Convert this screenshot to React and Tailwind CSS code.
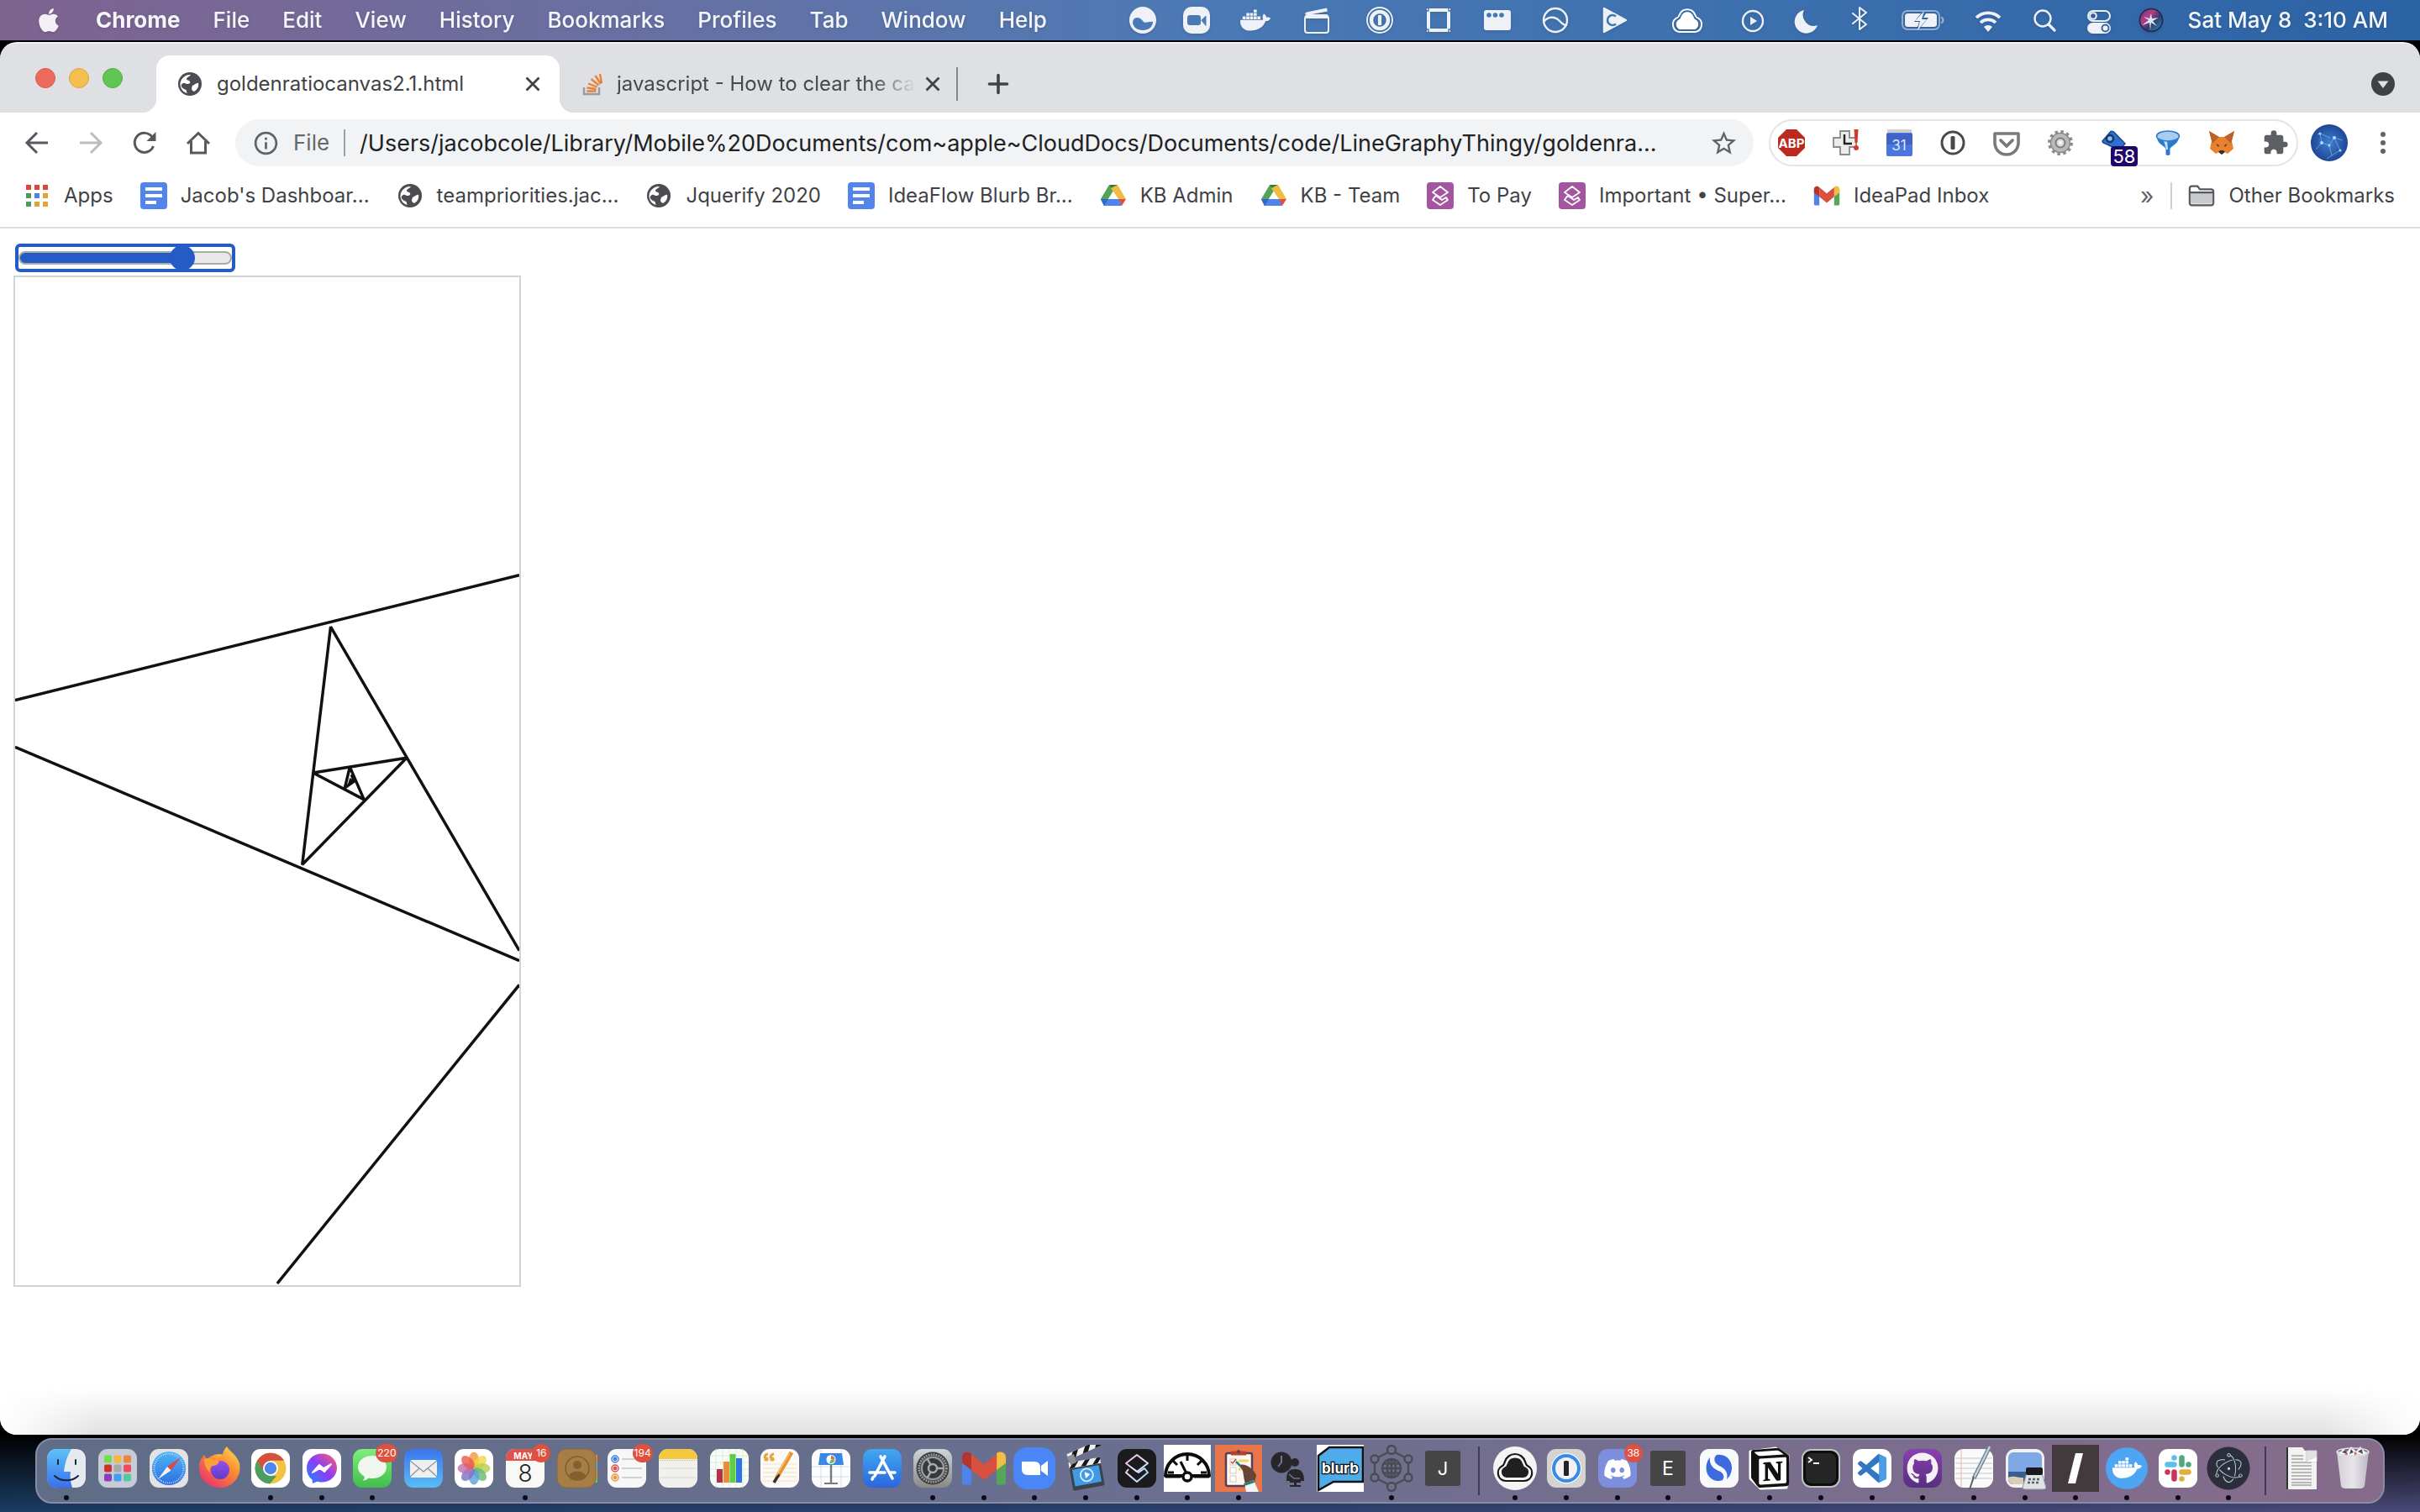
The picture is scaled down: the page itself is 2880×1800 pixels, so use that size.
import { useState } from "react";
import {
  FaApple,
  FaDocker,
  FaDiscord,
  FaGithub,
} from "react-icons/fa";
import { SiElectron, SiNotion } from "react-icons/si";
import { MdExtension, MdStarBorder, MdOutlineInfo } from "react-icons/md";

const INK = "#eef2f8";

/* ---------- menu bar ---------- */

const MENUS = ["File", "Edit", "View", "History", "Bookmarks", "Profiles", "Tab", "Window", "Help"];

function Glyph({ children, w = 36 }) {
  return (
    <svg width={w} height="36" viewBox={`0 0 ${w} 36`} fill="none" stroke={INK} strokeWidth="2.4" strokeLinejoin="round" strokeLinecap="round" aria-hidden="true">
      {children}
    </svg>
  );
}

const STATUS = [
  ["Camo", "w-[60px]", <Glyph><circle cx="18" cy="18" r="16" fill={INK} stroke="none" /><path d="M6 20c1-7 9-6 12-1 3 4 7 0 12 1 0 6-5 10-12 10S6 26 6 20z" fill="#4a7ab5" stroke="none" /></Glyph>],
  ["Zoom", "w-[68px]", <Glyph><rect x="2" y="2" width="32" height="32" rx="10" fill={INK} stroke="none" /><rect x="7" y="12" width="16" height="12" rx="3" fill="#4a7ab5" stroke="none" /><path d="M24 18l5-5v11z" fill="#4a7ab5" stroke="#4a7ab5" strokeWidth="1" /></Glyph>],
  ["Docker", "w-[72px]", <FaDocker size={36} color={INK} />],
  ["Clips", "w-[74px]", <Glyph><rect x="4" y="13" width="28" height="20" rx="3" strokeWidth="2" /><path d="M4 14q0-3 3-3h22q3 0 3 3v2H4z" fill={INK} stroke="none" /><path d="M4 11q0-2 2-2.500L30 3.500l1 4L12 11z" fill={INK} stroke="none" /></Glyph>],
  ["1Password", "w-[76px]", <Glyph><circle cx="18" cy="18" r="15" strokeWidth="1.800" /><circle cx="18" cy="18" r="10" strokeWidth="4.500" /><path d="M18 12v12" strokeWidth="4.200" strokeLinecap="butt" /></Glyph>],
  ["Display", "w-[64px]", <Glyph><rect x="6" y="6" width="24" height="24" strokeWidth="4" strokeLinejoin="miter" /><path d="M6 4v3H4M30 4v3h2M6 32v-3H4M30 32v-3h2" stroke="#4279b4" strokeWidth="1.400" strokeLinecap="butt" /></Glyph>],
  ["Windows", "w-[76px]", <Glyph><rect x="2" y="6" width="32" height="24" rx="3" fill={INK} stroke="none" /><g fill="#4279b4" stroke="none"><circle cx="8" cy="12" r="2.800" /><circle cx="15.500" cy="12" r="2.800" /><circle cx="23" cy="12" r="2.800" /></g></Glyph>],
  ["Sync", "w-[62px]", <Glyph><circle cx="18" cy="18" r="14" /><path d="M5 19c4-5 12-6 17-1 4 4 6 6 9 6" /></Glyph>],
  ["Player", "w-[80px]", <Glyph><path d="M5 4l26 14L5 32z" fill={INK} stroke={INK} /><path d="M19 13.500a6 6 0 1 0 0 9" stroke="#3d7ab2" strokeWidth="2.600" strokeLinecap="butt" /></Glyph>],
  ["Cloud", "w-[92px]", <Glyph w={40}><path d="M11 32a9 9 0 0 1-4-16.500c2 0 3-2 4-4.500a10 10 0 0 1 18 0c1 2.500 2 4.500 4 4.500A9 9 0 0 1 29 32z" strokeWidth="2" stroke="#fff" /><path d="M11 29a6.500 6.500 0 0 1-2-11c3-1 3-3 4-5a7.500 7.500 0 0 1 14 0c1 2 1 4 4 5a6.500 6.500 0 0 1-2 11z" fill="#fff" stroke="none" /></Glyph>],
  ["Now playing", "w-[64px]", <Glyph><circle cx="18" cy="19" r="12" /><path d="M15 14l8 5-8 5z" fill={INK} stroke="none" /></Glyph>],
  ["Do not disturb", "w-[66px]", <Glyph><path d="M14 6a14 14 0 1 0 16 18A13 13 0 0 1 14 6z" fill={INK} stroke="none" /></Glyph>],
  ["Bluetooth", "w-[58px]", <Glyph><path d="M10 10l16 13-8 6V3l8 6-16 13" strokeWidth="2" /></Glyph>],
  ["Battery", "w-[92px]", <Glyph w={54}><rect x="3" y="7" width="44" height="22" rx="6" strokeWidth="2" opacity=".5" /><path d="M50 15q3 3 0 6" opacity=".5" /><path d="M10 10h15l-8 10h6l-2 6H10q-4 0-4-3V13q0-3 4-3zM31 10h9q4 0 4 3v10q0 3-4 3H25l9-11h-6z" fill={INK} stroke="none" /><path d="M29 7L18 19h6l-3 11 11-13h-6z" fill={INK} stroke="none" /></Glyph>],
  ["Wi-Fi", "w-[64px]", <Glyph><path d="M4 15a20 20 0 0 1 28 0M9 21a13 13 0 0 1 18 0" strokeWidth="3.800" strokeLinecap="butt" /><path d="M13 26a7 7 0 0 1 10 0l-5 6z" fill={INK} stroke="none" /></Glyph>],
  ["Spotlight", "w-[70px]", <Glyph><circle cx="16" cy="16" r="9.500" /><path d="M23 23l7 7" strokeWidth="3.200" /></Glyph>],
  ["Control Center", "w-[60px]", <Glyph><rect x="5" y="7" width="26" height="12" rx="6" strokeWidth="2" /><circle cx="11" cy="13" r="3.800" strokeWidth="2" /><rect x="4" y="21" width="28" height="13" rx="6.500" fill={INK} stroke="none" /><circle cx="25.500" cy="27.500" r="4" fill={INK} stroke="#3169aa" strokeWidth="2" /></Glyph>],
  ["Siri", "w-[64px]", <Glyph><defs><linearGradient id="siri" x1="0" y1="0" x2="1" y2="1"><stop offset="0" stopColor="#4d3a78" /><stop offset=".35" stopColor="#b83c86" /><stop offset=".6" stopColor="#2f3c74" /><stop offset="1" stopColor="#2a9db0" /></linearGradient></defs><circle cx="18" cy="18" r="13.500" fill="url(#siri)" stroke="#25244a" strokeWidth="1.500" /><path d="M18 10l1 6 8-1-7 4 5 6-7-4-1 9-1-9-9 3 8-6-6-4 7 2z" fill="#e6f6ff" stroke="none" opacity=".9" /></Glyph>],
];

function MenuBar() {
  return (
    <header className="flex h-12 shrink-0 items-center bg-linear-to-r from-[#7f638f] via-[#4a7ab5] to-[#2c63a5] pr-[38px] pl-[42px] text-[26px] font-medium text-[#f4f6fa]">
      <button aria-label="Apple menu" className="flex w-[72px] items-center drop-shadow">
        <FaApple size={32} color="#f2f0f6" />
      </button>
      <nav className="flex gap-[39px] drop-shadow">
        <button className="font-bold">Chrome</button>
        {MENUS.map((m) => (
          <button key={m}>{m}</button>
        ))}
      </nav>
      <div className="ml-auto flex items-center drop-shadow">
        {STATUS.map(([label, width, icon]) => (
          <button key={label} aria-label={label} className={`flex shrink-0 items-center justify-center ${width}`}>
            {icon}
          </button>
        ))}
        <button className="ml-3 whitespace-pre">Sat May 8  3:10 AM</button>
      </div>
    </header>
  );
}

/* ---------- small shared icons ---------- */

function Globe() {
  return (
    <svg width="28" height="28" viewBox="0 0 28 28" aria-hidden="true">
      <circle cx="14" cy="14" r="14" fill="#4b4d52" />
      <path d="M15 3c-1 2-5 3-5 5s3 1 4 3-1 3-3 3-3-2-5-1-3 2-2 4c1 3 5 3 6 5 0 1 0 2 1 3-5-1-8-5-8.500-10S6 4 13 3zM17 16c3-1 5-4 7-3 1 3-1 8-5 10-2-1-3-2-3-4 1-1 0-2 1-3z" fill="#fff" />
    </svg>
  );
}

function Cross() {
  return (
    <svg width="20" height="20" viewBox="0 0 20 20" stroke="#3f4246" strokeWidth="2.800" aria-hidden="true">
      <path d="M2.500 2.500l15 15M17.500 2.500l-15 15" />
    </svg>
  );
}

function Docs() {
  return (
    <svg width="32" height="32" viewBox="0 0 32 32" aria-hidden="true">
      <rect width="32" height="32" rx="4" fill="#5285ec" />
      <path d="M6 8h20M6 16h20M6 24h13" stroke="#fff" strokeWidth="4" />
    </svg>
  );
}

function Drive() {
  return (
    <svg width="32" height="32" viewBox="0 0 32 32" aria-hidden="true">
      <path d="M11 3L1 20l4 8 11-18z" fill="#54a257" />
      <path d="M11 3h10l-5 8z" fill="#2f7d3c" />
      <path d="M21 3l10 17H21L13 7z" fill="#f0bb41" />
      <path d="M1 20l4 8h21l-3-8z" fill="#4f84ee" />
      <path d="M1 20l4 8 5-8z" fill="#3565cf" />
      <path d="M22 20h9l-5 8z" fill="#dd5144" />
      <path d="M16 11l6 9H10z" fill="#fff" />
    </svg>
  );
}

function Purple() {
  return (
    <svg width="32" height="32" viewBox="0 0 32 32" fill="none" stroke="#fff" strokeWidth="1.800" strokeLinejoin="round" aria-hidden="true">
      <rect width="32" height="32" rx="4" fill="#a4559f" stroke="none" />
      <path d="M16 5l9 7-9 6-9-6zM9 18l-2 3 9 6 9-6-2-3-5 3-7-5z" />
    </svg>
  );
}

function GmailShape() {
  return (
    <g>
      <path d="M0 6v22a2 2 0 0 0 2 2h6V12z" fill="#4f84ec" />
      <path d="M38 6v22a2 2 0 0 1-2 2h-6V12z" fill="#55a65b" />
      <path d="M30 4v13l8-6V6c0-5-5-6-8-4z" fill="#f1bd42" />
      <path d="M0 6v5l8 6V3C5 0 0 1 0 6z" fill="#b4352b" />
      <path d="M8 3v14l11 9 11-9V3l-11 9z" fill="#d95040" />
    </g>
  );
}

function Gmail() {
  return (
    <svg width="32" height="26" viewBox="-1 0 40 31" aria-hidden="true">
      <GmailShape />
    </svg>
  );
}

function AppsGrid() {
  const c = ["#d9483b", "#d9483b", "#d9483b", "#4d9b57", "#4b83ec", "#e2a33a", "#4d9b57", "#e2a33a", "#e2a33a"];
  return (
    <svg width="32" height="32" viewBox="0 0 32 32" aria-hidden="true">
      {c.map((f, i) => (
        <rect key={i} x={3 + (i % 3) * 10} y={3 + Math.floor(i / 3) * 10} width="6" height="6" fill={f} />
      ))}
    </svg>
  );
}

/* ---------- browser chrome ---------- */

function TabStrip() {
  return (
    <div className="flex h-[82px] items-end bg-[#dfe0e4]">
      <div className="flex h-full w-[170px] items-center gap-4 pl-[42px]">
        <button aria-label="Close window" className="size-6 rounded-full border border-[#d65b50] bg-[#ec6a5e]" />
        <button aria-label="Minimize window" className="size-6 rounded-full border border-[#d9a440] bg-[#f4bf50]" />
        <button aria-label="Zoom window" className="size-6 rounded-full border border-[#4fae41] bg-[#62c655]" />
      </div>
      <div className="size-4 rounded-br-2xl bg-[#dfe0e4] shadow-[8px_8px_0_4px_#fff] [clip-path:inset(0)]" />
      <div className="flex h-[68px] w-[480px] items-center rounded-t-2xl bg-white pr-[22px] pl-[26px] text-[#3f4246]">
        <Globe />
        <button className="ml-[18px] flex-1 text-left">goldenratiocanvas2.1.html</button>
        <button aria-label="Close tab"><Cross /></button>
      </div>
      <div className="size-4 rounded-bl-2xl bg-[#dfe0e4] shadow-[-8px_8px_0_4px_#fff] [clip-path:inset(0)]" />
      <div className="flex h-[68px] w-[464px] items-center gap-[14px] pl-[10px] text-[#45484c]">
        <svg width="28" height="28" viewBox="0 0 28 28" fill="none" className="shrink-0" aria-hidden="true">
          <path d="M3 18v8h18v-8" stroke="#9a9b9e" strokeWidth="2.400" />
          <path d="M6.500 22.500h11M6.500 18.500l11 1.500M8 13.500l10.500 4M11.500 8l9 7.500M16.500 4l6.500 10M22 2l2 11" stroke="#e8823a" strokeWidth="2.400" />
        </svg>
        <button className="w-[356px] shrink-0 text-left whitespace-nowrap [mask-image:linear-gradient(to_right,#000_85%,transparent)]">
          javascript - How to clear the ca
        </button>
        <button aria-label="Close tab" className="-ml-1"><Cross /></button>
        <span className="ml-1 h-10 w-[2px] shrink-0 bg-[#85878b]" />
      </div>
      <button aria-label="New tab" className="ml-[28px] flex h-[68px] items-center">
        <svg width="28" height="28" viewBox="0 0 28 28" stroke="#3f4246" strokeWidth="3.600" strokeLinecap="round" aria-hidden="true">
          <path d="M14 3.500v21M3.500 14h21" />
        </svg>
      </button>
      <button aria-label="Search tabs" className="mr-[30px] ml-auto flex h-[68px] items-center">
        <svg width="28" height="28" viewBox="0 0 28 28" aria-hidden="true">
          <circle cx="14" cy="14" r="14" fill="#3e4145" />
          <path d="M7.500 10.500h13L14 19z" fill="#dfe0e4" />
        </svg>
      </button>
    </div>
  );
}

const EXTENSIONS = [
  ["AdBlock Plus", <><path d="M10 0h12l10 10v12L22 32H10L0 22V10z" fill="#ba2a1f" /><text x="16" y="21.500" textAnchor="middle" fontSize="15" fontWeight="700" fill="#fff">ABP</text></>],
  ["History clock", <><path d="M10 2h11v8h8v11h-8v9H10v-9H2V10h8z" fill="#ececec" stroke="#8b8b8b" strokeWidth="1.800" /><path d="M15 6v11h9" stroke="#222" strokeWidth="2.400" fill="none" /><path d="M26.500 0h5l-1 16h-3z" fill="#d8382c" /><circle cx="29" cy="22" r="3" fill="#d8382c" /></>],
  ["Calendar", <><rect x="2" y="0" width="29" height="6" fill="#cfcfcf" /><rect x="1" y="4" width="31" height="28" rx="2" fill="#4a76dd" /><path d="M1 5h31v13H1z" fill="#4163c6" /><text x="16" y="25" textAnchor="middle" fontSize="17" fill="#dbe6fb">31</text></>],
  ["Password manager", <><circle cx="16" cy="16" r="13" fill="#fff" stroke="#47494d" strokeWidth="3" /><rect x="13.500" y="8" width="5" height="16" rx="1.500" fill="#47494d" /></>],
  ["Pocket", <><path d="M2 5h28v11a14 14 0 0 1-28 0z" fill="none" stroke="#77797c" strokeWidth="3.600" strokeLinejoin="round" /><path d="M9 13l7 7 7-7" fill="none" stroke="#77797c" strokeWidth="3.800" strokeLinecap="round" strokeLinejoin="round" /></>],
  ["Settings", <><circle cx="16" cy="16" r="13" fill="none" stroke="#8a8a8a" strokeWidth="4" strokeDasharray="3.400 3.400" /><circle cx="16" cy="16" r="11.500" fill="#b9b9b9" stroke="#8a8a8a" strokeWidth="1.500" /><circle cx="16" cy="16" r="5.500" fill="#dcdcdc" stroke="#7d7d7d" strokeWidth="2" /><circle cx="16" cy="16" r="2" fill="#fff" /></>],
  ["Tags", <><path d="M2 14L12 2.500q3-1 5 2L29 17l-7 8-14-7-5-2z" fill="#2f6fd0" stroke="#1b478f" strokeWidth="1.500" /><circle cx="11" cy="11" r="4" fill="#8fbaf0" stroke="#153668" strokeWidth="2.400" /></>],
  ["Filter", <><path d="M3 9c0 8 8 10 10.500 14v7q2.500 2 5 0v-7C21 19 29 17 29 9z" fill="#2d78cf" /><path d="M10 12c2 4 3 8 4 12h2l-1-12z" fill="#bfe0fa" /><ellipse cx="16" cy="8" rx="13.500" ry="6" fill="#a9cdf1" stroke="#2d78cf" strokeWidth="1.500" /></>],
  ["MetaMask", <><path d="M1 2l12 7h6l12-7-3 12 2 9-7 6-4-2-3 3-3-3-4 2-7-6 2-9z" fill="#e8822e" /><path d="M1 2l12 7-8 8zM31 2L19 9l8 8z" fill="#b9602b" /><path d="M9 17l4 2-1 2zM23 17l-4 2 1 2z" fill="#4a3426" /><path d="M12 27l2-2h4l2 2-4 3z" fill="#33302f" /></>],
];

function Toolbar() {
  return (
    <div className="flex h-[72px] items-center bg-white pl-[28px] pr-[28px]">
      <div className="flex w-[252px] items-center gap-8 text-[#55585c]">
        <button aria-label="Back"><svg width="32" height="32" viewBox="0 0 32 32" fill="none" stroke="currentColor" strokeWidth="3" aria-hidden="true"><path d="M29 16H5M16 4L4 16l12 12" /></svg></button>
        <button aria-label="Forward" className="text-[#bcbdbf]"><svg width="32" height="32" viewBox="0 0 32 32" fill="none" stroke="currentColor" strokeWidth="3" aria-hidden="true"><path d="M3 16h24M16 4l12 12-12 12" /></svg></button>
        <button aria-label="Reload"><svg width="32" height="32" viewBox="0 0 32 32" fill="none" stroke="currentColor" strokeWidth="3" aria-hidden="true"><path d="M26.500 20A11.500 11.500 0 1 1 25 9" /><path d="M29.500 3v11h-11z" fill="currentColor" stroke="none" /></svg></button>
        <button aria-label="Home"><svg width="32" height="32" viewBox="0 0 32 32" fill="none" stroke="currentColor" strokeWidth="3" aria-hidden="true"><path d="M3 17L16 4.500 29 17M7.500 14v14h17V14" strokeLinejoin="miter" /></svg></button>
      </div>
      <div className="flex h-14 min-w-0 flex-1 items-center rounded-full bg-[#f1f3f4] pr-[18px] pl-5">
        <MdOutlineInfo size={33} color="#606367" className="shrink-0" />
        <label htmlFor="address" className="ml-4 text-[26px] text-[#65686c]">File</label>
        <span className="ml-[17px] h-8 w-[2px] shrink-0 bg-[#9c9fa3]" />
        <input id="address" className="ml-[17px] min-w-0 flex-1 bg-transparent text-[27px] text-[#202124] outline-none" defaultValue="/Users/jacobcole/Library/Mobile%20Documents/com~apple~CloudDocs/Documents/code/LineGraphyThingy/goldenra..." />
        <button aria-label="Bookmark this page"><MdStarBorder size={35} color="#606367" /></button>
      </div>
      <div className="ml-[18px] flex h-14 items-center gap-8 rounded-full border-2 border-[#e3e4e6] px-[9px]">
        {EXTENSIONS.map(([label, art]) => (
          <button key={label} aria-label={label} className="relative">
            <svg width="32" height="32" viewBox="0 0 32 32" aria-hidden="true">{art}</svg>
            {label === "Tags" && (
              <span className="absolute top-5 left-3 flex h-6 w-8 items-center justify-center rounded bg-[#1d0668] text-[22px] leading-6 text-white">58</span>
            )}
          </button>
        ))}
        <button aria-label="Extensions"><MdExtension size={32} color="#5c5f63" /></button>
      </div>
      <button aria-label="Profile" className="ml-[15px]">
        <svg width="44" height="44" viewBox="0 0 44 44" aria-hidden="true">
          <defs><radialGradient id="ava"><stop offset="0" stopColor="#3f7fd0" /><stop offset="1" stopColor="#1f4796" /></radialGradient></defs>
          <circle cx="22" cy="22" r="22" fill="url(#ava)" />
          <path d="M6 30l7-8 9 3 6-9 10 3M13 22l-2-11 12 5M22 25l3 12 10-6-7-15M8 12l3-1M25 37l-6 4" stroke="#7db8ea" strokeWidth="1" fill="none" opacity=".7" />
          <g fill="#a8dcf7"><circle cx="13" cy="22" r="2" /><circle cx="28" cy="16" r="2" /><circle cx="22" cy="25" r="1.500" /><circle cx="35" cy="31" r="1.500" /><circle cx="11" cy="11" r="1.500" /></g>
        </svg>
      </button>
      <button aria-label="Menu" className="ml-[26px]">
        <svg width="32" height="32" viewBox="0 0 32 32" fill="#606367" aria-hidden="true"><circle cx="16" cy="6" r="3" /><circle cx="16" cy="16" r="3" /><circle cx="16" cy="26" r="3" /></svg>
      </button>
    </div>
  );
}

const BOOKMARKS = [
  ["Apps", <AppsGrid />],
  ["Jacob's Dashboar...", <Docs />],
  ["teampriorities.jac...", <Globe />],
  ["Jquerify 2020", <Globe />],
  ["IdeaFlow Blurb Br...", <Docs />],
  ["KB Admin", <Drive />],
  ["KB - Team", <Drive />],
  ["To Pay", <Purple />],
  ["Important • Super...", <Purple />],
  ["IdeaPad Inbox", <Gmail />],
];

function BookmarksBar() {
  return (
    <nav className="flex h-[66px] items-center border-b-2 border-[#dcdce0] bg-white pr-[30px] pb-[10px] pl-7 text-[#3f4246]">
      <div className="flex items-center gap-8">
        {BOOKMARKS.map(([label, icon], i) => (
          <a key={i} href="#" className="flex shrink-0 items-center gap-4 whitespace-nowrap">
            <span className="flex w-8 justify-center">{icon}</span>
            {label}
          </a>
        ))}
      </div>
      <button aria-label="More bookmarks" className="ml-auto text-[28px] text-[#606367]">»</button>
      <span className="ml-[20px] h-8 w-[2px] bg-[#cfd0d3]" />
      <a href="#" className="ml-[19px] flex items-center gap-4 whitespace-nowrap">
        <svg width="32" height="28" viewBox="0 0 34 28" aria-hidden="true">
          <path d="M2 5q0-3 3-3h7l3 4h14q3 0 3 3v14q0 3-3 3H5q-3 0-3-3z" fill="#fff" stroke="#55585c" strokeWidth="2.400" />
          <path d="M3 10h28v14H3z" fill="#c9cacc" /><path d="M2 10h30" stroke="#55585c" strokeWidth="2.400" />
        </svg>
        Other Bookmarks
      </a>
    </nav>
  );
}

/* ---------- page ---------- */

function Page() {
  const [value, setValue] = useState(81);
  return (
    <main className="flex flex-1 flex-col bg-white px-4 pt-[18px]">
      <div className="ml-[2px] flex h-[34px] w-[262px] items-center rounded-md border-4 border-[#245bc5]">
        <input
          type="range"
          min="0"
          max="100"
          value={value}
          onChange={(e) => setValue(Number(e.target.value))}
          aria-label="Ratio"
          style={{ "--fill": `${value - 3}%` }}
          className="h-4 w-full appearance-none rounded-full border-2 border-[#a9a9a9] bg-[linear-gradient(to_right,#245bc5_var(--fill),#e9e9e9_var(--fill))] outline-none [&::-webkit-slider-thumb]:size-[30px] [&::-webkit-slider-thumb]:appearance-none [&::-webkit-slider-thumb]:rounded-full [&::-webkit-slider-thumb]:bg-[#245bc5]"
        />
      </div>
      <svg width="604" height="1204" viewBox="-2 -2 604 1204" className="mt-1 border-2 border-[#d3d3d3]" fill="none" stroke="#111" strokeWidth="4" strokeLinejoin="bevel" role="img" aria-label="Nested triangle spiral">
        <path d="M-2 503L602 353" strokeWidth="3.500" />
        <path d="M-2 559L602 815" strokeWidth="3.500" />
        <path d="M602 844L312 1202" strokeWidth="3.500" />
        <path d="M602 803L376 415L342 700L467 572L355 590L416 622L399 583L393 608L404 600L401 592" strokeWidth="3.500" />
        <path d="M399 596l4 3-7 6z" fill="#111" stroke="none" />
      </svg>
      <div className="-mx-4 mt-auto h-[56px] bg-linear-to-b from-transparent to-[#e1e1e1] [mask-image:linear-gradient(to_right,transparent,#000_4%,#000_96%,transparent)]" />
    </main>
  );
}

/* ---------- dock ---------- */

function Tile({ fill, stroke }) {
  return <rect x="5" y="5" width="46" height="46" rx="11" fill={fill} stroke={stroke} />;
}

function Grad({ id, a, b }) {
  return (
    <linearGradient id={id} x1="0" y1="0" x2="0" y2="1">
      <stop offset="0" stopColor={a} />
      <stop offset="1" stopColor={b} />
    </linearGradient>
  );
}

const ART = {
  finder: <>
    <defs><Grad id="fi" a="#5cc4f6" b="#3a6ff0" /><clipPath id="ficlip"><rect x="5" y="5" width="46" height="46" rx="11" /></clipPath></defs>
    <g clipPath="url(#ficlip)"><Tile fill="#e6e9ee" /><path d="M5 5h29c-5 8-8 17-9 27h8c-1 7 0 13 2 19H5z" fill="url(#fi)" /></g>
    <path d="M18 18v5M39 18v5M14 37c7 7 21 7 28 0" stroke="#17273a" strokeWidth="2" fill="none" strokeLinecap="round" />
  </>,
  launchpad: <>
    <Tile fill="#c6cbd5" />
    {["#74de4c", "#f4b83c", "#e8863a", "#c93429", "#a4a9af", "#ee4b62", "#8d3cc2", "#3f9ff2", "#5bc59b"].map((c, i) => (
      <rect key={i} x={12 + (i % 3) * 11.5} y={12.5 + Math.floor(i / 3) * 11} width="9" height="9" rx="2" fill={c} />
    ))}
  </>,
  safari: <>
    <defs><Grad id="sa" a="#4db5f5" b="#2f6fe0" /></defs>
    <Tile fill="#e3e3e5" /><circle cx="28" cy="28" r="20" fill="url(#sa)" /><circle cx="28" cy="28" r="17.500" fill="none" stroke="#d5e9fb" strokeWidth="2" strokeDasharray=".8 1.600" />
    <path d="M42 15L30.500 30.500 26 26z" fill="#e2483d" /><path d="M15 41l11-15 4.500 4.500z" fill="#f4f4f4" />
  </>,
  firefox: <>
    <defs><linearGradient id="ff" x1="1" y1="0" x2=".2" y2="1"><stop offset="0" stopColor="#ffe74e" /><stop offset=".45" stopColor="#fb8a35" /><stop offset="1" stopColor="#e8316f" /></linearGradient><Grad id="ffb" a="#9a4df0" b="#5b3cc8" /></defs>
    <circle cx="28" cy="31" r="20" fill="url(#ff)" />
    <path d="M32 12C33 6 36 3 37 2c3 6 12 10 15 20 3 15-8 29-22 29C14 51 3 40 4 27c0-7 3-12 6-15l3 5c5-3 9-1 13 0z" fill="url(#ff)" />
    <circle cx="29" cy="30" r="11" fill="url(#ffb)" />
    <path d="M10 17c5-2 9-1 12 1 3 0 5 0 6 1-1 4-4 6-8 6-3 1-4 4-3 8-5-4-7-10-7-16z" fill="#fba03a" />
  </>,
  chrome: <>
    <Tile fill="#fff" /><circle cx="28" cy="28" r="18.500" fill="#f2c343" />
    <path d="M12 19A18.500 18.500 0 0 1 44 18.700H28l-8 14z" fill="#d5503f" />
    <path d="M12 18.700l8.500 14 7.500 4.300-4 9A18.500 18.500 0 0 1 12 18.700z" fill="#4b9d60" /><path d="M28 37h7l-8 9.500-4-.7z" fill="#4b9d60" />
    <circle cx="28" cy="28" r="9" fill="#fff" /><circle cx="28" cy="28" r="7.200" fill="#4f86ec" />
  </>,
  messenger: <>
    <defs><linearGradient id="ms" x1="0" y1="1" x2="1" y2="0"><stop offset="0" stopColor="#1c8cff" /><stop offset=".5" stopColor="#8d3cf5" /><stop offset="1" stopColor="#ff5f74" /></linearGradient></defs>
    <Tile fill="#fff" /><path d="M28 10.500c10 0 18 7.500 18 17s-8 17-18 17c-2 0-4-.3-5.500-.8L17 46l-.5-4.500C12.500 38.500 10 33.500 10 27.500c0-9.500 8-17 18-17z" fill="url(#ms)" />
    <path d="M17 33l8-9 5 4 9-5-8 9-5-4z" fill="#fff" stroke="#fff" strokeWidth="2" strokeLinejoin="round" />
  </>,
  messages: <>
    <defs><Grad id="me" a="#7df07a" b="#43bc4c" /></defs>
    <Tile fill="url(#me)" /><path d="M28 13c10 0 17 6 17 13.500S38 40 28 40c-2 0-3 0-4.500-.5-1.500 2-4 3-7 3 2-1.500 2.500-3 2-5C14 35 11 31 11 26.500 11 19 18 13 28 13z" fill="#f0f7ee" />
  </>,
  mail: <>
    <defs><Grad id="ma" a="#3b74ee" b="#58bdf6" /></defs>
    <Tile fill="url(#ma)" /><rect x="12" y="18" width="32" height="21" rx="2" fill="#efefef" /><path d="M12 19l16 13 16-13M12 38l11-10M44 38L33 28" stroke="#8e9297" strokeWidth="1.200" fill="none" />
  </>,
  photos: <>
    <Tile fill="#fff" />
    {["#f29a37", "#f1d63d", "#b4cf4b", "#65b977", "#5d9fdc", "#7c71c0", "#c06fae", "#e8584c"].map((c, i) => (
      <ellipse key={c} cx="28" cy="18" rx="6" ry="9.500" fill={c} opacity=".8" transform={`rotate(${i * 45} 28 28)`} />
    ))}
  </>,
  calendar: <>
    <Tile fill="#f8f8f6" /><path d="M5 19v-3A11 11 0 0 1 16 5h24a11 11 0 0 1 11 11v3z" fill="#e0524a" />
    <text x="26" y="16.500" fontSize="10" fontWeight="700" fill="#fff" textAnchor="middle">MAY</text>
    <text x="28" y="44" fontSize="28" fontWeight="300" fill="#222" textAnchor="middle">8</text>
  </>,
  contacts: <>
    <path d="M49 12h4v9h-4zM49 30h4v8h-4z" fill="#e0873b" /><path d="M49 21h4v9h-4z" fill="#57b0e8" /><path d="M49 38h4v7h-4z" fill="#6cc65a" />
    <Tile fill="#a57d45" stroke="#8d6a3a" /><circle cx="29" cy="28" r="14" fill="none" stroke="#80602f" strokeWidth="1.500" /><circle cx="29" cy="24" r="5" fill="#80602f" /><path d="M19 37c2-7 18-7 20 0-5 6-15 6-20 0z" fill="#80602f" />
  </>,
  reminders: <>
    <Tile fill="#f7f7f7" /><path d="M22 17h24M22 28h24M22 39h24" stroke="#c5c5c5" strokeWidth="1.500" />
    <g fill="none" strokeWidth="1.500"><circle cx="14" cy="17" r="4" stroke="#3c7df0" /><circle cx="14" cy="28" r="4" stroke="#e0524a" /><circle cx="14" cy="39" r="4" stroke="#e69a3c" /></g>
    <circle cx="14" cy="17" r="2.400" fill="#3c7df0" /><circle cx="14" cy="28" r="2.400" fill="#e0524a" /><circle cx="14" cy="39" r="2.400" fill="#e69a3c" />
  </>,
  notes: <>
    <Tile fill="#f1f0ed" /><path d="M5 17v-1A11 11 0 0 1 16 5h24a11 11 0 0 1 11 11v1z" fill="#f4c83f" /><path d="M5 18.500h46" stroke="#bdbdb9" strokeDasharray="1 1" /><path d="M6 28h44M6 39h44" stroke="#d8d7d3" />
  </>,
  numbers: <>
    <Tile fill="#f9fbf7" /><path d="M12 5v46M20 5v46M28 5v46M36 5v46M44 5v46M5 13h46M5 21h46M5 29h46M5 37h46" stroke="#cfe8c8" strokeWidth=".7" />
    <rect x="13" y="29" width="7" height="16" fill="#b5304a" /><rect x="21" y="20" width="7" height="25" fill="#e68f38" /><rect x="28.500" y="11" width="7" height="34" fill="#5fcf46" /><rect x="36" y="16" width="7" height="29" fill="#2f74e4" />
  </>,
  pages: <>
    <Tile fill="#fbfaf6" /><path d="M8 23h40M8 28h40M8 33h40M8 38h40M8 43h40" stroke="#f2e0c4" />
    <path d="M10 16q0-5 4-5M17 16q0-5 4-5" stroke="#e9a441" strokeWidth="3" fill="none" /><circle cx="12" cy="17" r="2.600" fill="#e9a441" /><circle cx="19" cy="17" r="2.600" fill="#e9a441" />
    <path d="M42 9L25 38" stroke="#e8932f" strokeWidth="5" /><path d="M27 35l-6 10" stroke="#333" strokeWidth="3.500" /><path d="M40 10L24 37" stroke="#f7c375" strokeWidth="1.200" />
  </>,
  keynote: <>
    <Tile fill="#fdfdfd" /><path d="M16 5v46M40 5v46M5 26h46M5 38h46" stroke="#cfe0f3" strokeWidth="1" />
    <path d="M15 10h26l2 14H13z" fill="#3a87e6" /><circle cx="28" cy="17.500" r="5.500" fill="#fff" /><path d="M28 17.500V13a4.500 4.500 0 0 1 4.500 4.500z" fill="#ee6a43" /><path d="M28 17.500h4.500A4.500 4.500 0 0 1 26 21.500z" fill="#63bf57" /><path d="M28 24v22" stroke="#777b80" strokeWidth="2.400" /><path d="M20 46h16" stroke="#777b80" strokeWidth="2" />
  </>,
  appstore: <>
    <defs><Grad id="as" a="#41a7ef" b="#2b66df" /></defs>
    <Tile fill="url(#as)" /><path d="M31 14L19 37M26 14l14 26M13 33h18M37 33h6M17 39l-1 2" stroke="#fff" strokeWidth="3.600" strokeLinecap="round" fill="none" />
  </>,
  settings: <>
    <defs><Grad id="se" a="#cdd6da" b="#8b8985" /></defs>
    <Tile fill="url(#se)" /><circle cx="28" cy="28" r="19.500" fill="#3e3f42" /><circle cx="28" cy="28" r="16.500" fill="#55575b" stroke="#a3a5a8" strokeWidth="2.500" strokeDasharray="1.500 1.500" /><circle cx="28" cy="28" r="13" fill="#38393c" stroke="#9d9fa2" strokeWidth="2" /><circle cx="28" cy="28" r="5" fill="#38393c" stroke="#a9abae" strokeWidth="2.500" /><path d="M33 28h8M25.500 32.500l-4 7M25.500 23.500l-4-7" stroke="#a9abae" strokeWidth="2.500" />
  </>,
  gmail: <g transform="translate(2 7) scale(1.370 1.350)"><GmailShape /></g>,
  zoom: <><rect x="3" y="3" width="50" height="50" rx="16" fill="#4b86f6" /><path d="M13 20h15q7 0 7 7v9H20q-7 0-7-7zM36 25l8-6v18l-8-6z" fill="#fff" /></>,
  clapper: <>
    <g transform="rotate(-10 28 34)"><rect x="10" y="25" width="38" height="27" rx="2" fill="#3c424a" /><rect x="13" y="27" width="32" height="20" fill="#3f9be6" /><circle cx="29" cy="36" r="7.500" fill="none" stroke="#d7ecfb" strokeWidth="1.800" /><path d="M27 32l6 4-6 4z" fill="#fff" /><path d="M10 18h38v7H10z" fill="#eee" /><path d="M10 25l6-7h6l-6 7zM24 25l6-7h6l-6 7zM38 25l6-7h4v2l-4 5z" fill="#161616" /></g>
    <g transform="rotate(-24 10 17)"><path d="M8 10h42v7H8z" fill="#f2f2f2" /><path d="M10 17l6-7h7l-6 7zM26 17l6-7h7l-6 7zM42 17l5-7h3v7z" fill="#161616" /></g>
    <path d="M6 14l8-3 3 10-7 3z" fill="#8b9096" />
  </>,
  shortcuts: <>
    <defs><linearGradient id="sh" x1="0" y1="0" x2="1" y2="1"><stop offset="0" stopColor="#f3b6dc" /><stop offset=".5" stopColor="#e9e4ff" /><stop offset="1" stopColor="#7fd6f2" /></linearGradient></defs>
    <Tile fill="#1b1b1d" /><path d="M28 12l13 10-13 10-13-10zM18 29l-3 4 13 11 13-11-4-5-7 5-10-7" fill="none" stroke="url(#sh)" strokeWidth="2" strokeLinejoin="round" />
  </>,
  gauge: <>
    <rect width="56" height="56" fill="#fff" /><path d="M2 37a26 26 0 0 1 52 0z" fill="none" stroke="#0b0b0b" strokeWidth="4" strokeLinejoin="round" /><path d="M2 38h18M36 38h18M28 11v8M11 19l5 5M45 19l-5 5M5 33h7M51 33h-7M20 20l7 14" stroke="#0b0b0b" strokeWidth="3" /><circle cx="28" cy="38" r="5" fill="#fff" stroke="#0b0b0b" strokeWidth="3.400" />
  </>,
  tasks: <>
    <rect width="56" height="56" fill="#e9764a" /><rect x="13" y="10" width="31" height="39" rx="2" fill="#fdf9f1" stroke="#54405c" strokeWidth="2.500" /><path d="M19 10h18" stroke="#b5412f" strokeWidth="5" /><circle cx="28" cy="8" r="2" fill="#54405c" />
    <g fill="#fff" stroke="#cfc7be"><rect x="18" y="17" width="7" height="7" /><rect x="18" y="27" width="7" height="7" /><rect x="18" y="37" width="7" height="7" /></g>
    <path d="M28 19h12M28 29h10" stroke="#f3cf72" strokeWidth="3" /><path d="M19 20l2 2 4-5" stroke="#d23f35" strokeWidth="1.500" fill="none" /><path d="M25 20l16 16" stroke="#2c7f79" strokeWidth="2.500" /><path d="M30 24c6-2 15 4 19 12l-2 10-10 2c-3-6-3-13-4-17z" fill="#674436" /><path d="M35 46l11-4 6 14H37z" fill="#f6f6f6" /><path d="M34 46l12-4 1 3-12 4z" fill="#2c7f79" />
  </>,
  worker: <g fill="#26262b">
    <circle cx="18" cy="21" r="12.500" /><path d="M18 13v8l-4 5" stroke="#74728f" strokeWidth="2" fill="none" /><circle cx="34" cy="21" r="5" /><path d="M24 43c0-10 2-14 10-14s11 4 11 14h-4v2H28v-2z" /><path d="M27 35l6 5h7" stroke="#74728f" strokeWidth="1.500" fill="none" /><path d="M33 44h3v4h5v2H28v-2h5z" />
  </g>,
  blurb: <>
    <rect width="56" height="56" fill="#fff" /><path d="M2 13L15 3h40v41H20L2 54z" fill="#4facea" stroke="#111" strokeWidth="2.500" />
    <text x="28" y="34" fontSize="17" fontWeight="700" textAnchor="middle" fill="#fff" stroke="#111" strokeWidth="2.500" paintOrder="stroke">blurb</text>
  </>,
  network: <g fill="none" stroke="#4b4b54" strokeWidth="2.400">
    <circle cx="28" cy="28" r="11" /><ellipse cx="28" cy="28" rx="5" ry="11" /><path d="M17 28h22M19 22.500h18M19 33.500h18M28 17v22" />
    <circle cx="28" cy="6" r="5" /><circle cx="28" cy="50" r="5" /><circle cx="8" cy="17" r="4.500" /><circle cx="48" cy="17" r="4.500" /><circle cx="8" cy="39" r="4.500" /><circle cx="48" cy="39" r="4.500" /><path d="M24 9l-12 6M32 9l12 6M8 22v12M48 22v12M12 41l12 6M44 41l-12 6" />
  </g>,
  letterJ: <><rect x="7" y="7" width="42" height="42" rx="3" fill="#454545" /><text x="28" y="36" fontSize="22" fill="#fff" textAnchor="middle">J</text></>,
  cloud: <>
    <circle cx="28" cy="28" r="26" fill="#f4f4f4" /><path d="M17 43a9.500 9.500 0 0 1-4-18c2-1 2-3 3-5a12.500 12.500 0 0 1 24 0c1 2 1 4 3 5a9.500 9.500 0 0 1-4 18z" fill="none" stroke="#18181a" strokeWidth="2.200" /><path d="M18 39a6.500 6.500 0 0 1-3-12c3-1 3-3 4-5a9.500 9.500 0 0 1 18 0c1 2 1 4 4 5a6.500 6.500 0 0 1-3 12z" fill="#202022" />
  </>,
  onepassword: <>
    <Tile fill="#d4d4d2" /><circle cx="28" cy="28" r="18" fill="#fff" /><circle cx="28" cy="28" r="15" fill="#f2f2f2" stroke="#3a8be8" strokeWidth="4" /><rect x="25" y="19" width="6" height="18" rx="1.500" fill="#232327" />
  </>,
  discord: <><Tile fill="#7c8fdc" /><FaDiscord x={11} y={12} size={34} color="#fff" /></>,
  letterE: <><rect x="7" y="7" width="42" height="42" rx="3" fill="#454545" /><text x="28" y="36" fontSize="23" fill="#fff" textAnchor="middle">E</text></>,
  simplenote: <>
    <Tile fill="#f8f9fa" /><path d="M25 12c12-2 19 8 18 17-1 6-3 9-6 12 2-8-2-13-9-16-7-4-7-10-3-13z" fill="#3d6bdf" /><path d="M17 15c-6 7-6 18 0 24 4 4 10 5 15 3 3-4 1-9-5-11-7-3-11-8-10-16z" fill="#3d6bdf" />
  </>,
  notion: <><path d="M5 8L35 4l15 9-2 38-31 1L5 40z" fill="#fff" stroke="#fff" strokeWidth="3" strokeLinejoin="round" /><SiNotion x={5} y={4} size={47} color="#111" /></>,
  terminal: <><Tile fill="#bfc3c3" /><rect x="7" y="7" width="42" height="42" rx="9" fill="#0d0d0d" /><rect x="10" y="10" width="36" height="36" rx="7" fill="#262626" /><path d="M13 15l4 3-4 3M19 22h7" stroke="#fff" strokeWidth="1.800" fill="none" /></>,
  vscode: <>
    <Tile fill="#fff" /><svg x="11" y="11" width="34" height="34" viewBox="0 0 24 24"><path fill="#3277c4" d="M23.150 2.587L18.210.210a1.494 1.494 0 0 0-1.705.290l-9.460 8.630-4.120-3.128a.999.999 0 0 0-1.276.057L.327 7.261A1 1 0 0 0 .326 8.740L3.899 12 .326 15.260a1 1 0 0 0 .001 1.479L1.650 17.940a.999.999 0 0 0 1.276.057l4.120-3.128 9.460 8.630a1.492 1.492 0 0 0 1.704.290l4.942-2.377A1.500 1.500 0 0 0 24 20.060V3.939a1.500 1.500 0 0 0-.850-1.352zm-5.146 14.861L10.826 12l7.178-5.448v10.896z" /><path d="M18 .2l5.200 2.400q.8.500.8 1.400v16q0 1-.8 1.400L18 23.800z" fill="#4b9de6" /></svg>
  </>,
  github: <><defs><Grad id="gh" a="#8a3fb0" b="#56307f" /></defs><Tile fill="url(#gh)" /><FaGithub x={9} y={9} size={38} color="#f3f0f6" /></>,
  textedit: <>
    <Tile fill="#fafafa" /><path d="M6 16h44M6 22h44M6 28h44M6 34h44M6 40h44" stroke="#c4c6c9" /><path d="M13 6v44" stroke="#f0b2ae" /><path d="M47 2L28 40" stroke="#71828f" strokeWidth="5" /><path d="M47 2L27 42" stroke="#cfd9e0" strokeWidth="2" /><path d="M28 38l-5 15" stroke="#555e66" strokeWidth="2" />
  </>,
  preview: <>
    <Tile fill="#f2f2f2" /><rect x="8" y="9" width="40" height="38" rx="6" fill="#7ea9e4" /><path d="M8 32h40v9a6 6 0 0 1-6 6H14a6 6 0 0 1-6-6z" fill="#375f8c" /><path d="M8 39c8-3 12 1 18 0v8H14a6 6 0 0 1-6-6z" fill="#d8cdb8" />
    <path d="M30 33h18l5 18q0 2-3 2H28q-3 0-3-2z" fill="#dfe3e6" stroke="#8d9399" /><rect x="29" y="27" width="20" height="9" rx="2" fill="#1a1a1c" /><path d="M32 41h13M31 45h15" stroke="#57606a" strokeWidth="2.500" strokeDasharray="3 2" />
  </>,
  slash: <><rect width="56" height="56" fill="#433a3d" /><path d="M28 10h9l-9 36h-9z" fill="#fff" /></>,
  docker: <><circle cx="28" cy="28" r="25" fill="#4da5f4" /><FaDocker x={11} y={10} size={35} color="#fff" /></>,
  slack: <>
    <Tile fill="#fff" />
    <g strokeWidth="6.500" strokeLinecap="round"><path d="M23.500 15.500v0M15.500 23.500h8" stroke="#5cbfe8" /><path d="M32.500 15.500v8M40.500 23.500v0" stroke="#4fa97c" /><path d="M32.500 32.500h8M32.500 40.500v0" stroke="#e0af40" /><path d="M23.500 32.500v8M15.500 32.500v0" stroke="#cc335b" /></g>
  </>,
  electron: <><circle cx="28" cy="28" r="25.500" fill="#2c2f3b" /><SiElectron x={11} y={10} size={35} color="#b9dbe2" /></>,
  document: <>
    <path d="M11 3h18l3 4h14v46H11z" fill="#f2f2f0" /><path d="M11 3v50" stroke="#333" strokeWidth="2" /><path d="M16 13h14M16 17h14M16 21h24M16 25h24M16 29h24M16 33h24M16 37h24M16 41h24M16 45h24M16 48h24" stroke="#a5a5a5" strokeWidth="1.400" /><path d="M34 7h12v13H34z" fill="#e2e2e2" stroke="#cfcfcf" /><path d="M34 20l12-5v5z" fill="#fff" />
  </>,
  trash: <>
    <defs><linearGradient id="tr" x1="0" x2="1"><stop offset="0" stopColor="#d9d6dc" /><stop offset=".5" stopColor="#f1f0f3" /><stop offset="1" stopColor="#c4bfc8" /></linearGradient></defs>
    <path d="M9 8h38l-5 41q-1 3-5 3H19q-4 0-5-3z" fill="url(#tr)" opacity=".92" /><path d="M11 12l6-8 4 5 5-7 6 6 5-6 7 8-3 3-8-3-6 4-7-4-6 3z" fill="#f7f7f7" /><path d="M15 9l4-3 3 5zM34 8l5-3 1 6zM26 5l3 4-5 2z" fill="#4b4f56" /><path d="M18 12l3-3 1 4zM30 8l3 2-3 3z" fill="#c8604a" /><ellipse cx="28" cy="8.500" rx="19" ry="4.500" fill="none" stroke="#dcdce2" strokeWidth="1.500" />
  </>,
};

const APPS = [
  ["Finder", "finder", true], ["Launchpad", "launchpad"], ["Safari", "safari"], ["Firefox", "firefox"], ["Chrome", "chrome", true],
  ["Messenger", "messenger", true], ["Messages", "messages", true, "220"], ["Mail", "mail"], ["Photos", "photos"], ["Calendar", "calendar", true, "16"],
  ["Contacts", "contacts"], ["Reminders", "reminders", false, "194"], ["Notes", "notes"], ["Numbers", "numbers"], ["Pages", "pages"],
  ["Keynote", "keynote"], ["App Store", "appstore"], ["System Preferences", "settings", true], ["Gmail", "gmail", true], ["Zoom", "zoom", true],
  ["Clips", "clapper", true], ["Shortcuts", "shortcuts", true], ["Gauge", "gauge", true], ["Tasks", "tasks", true], ["Worker", "worker"],
  ["Blurb", "blurb"], ["Network", "network", true], ["J", "letterJ"], null,
  ["Cloud", "cloud", true], ["1Password", "onepassword", true], ["Discord", "discord", true, "38"], ["E", "letterE", true], ["Simplenote", "simplenote", true],
  ["Notion", "notion", true], ["Terminal", "terminal", true], ["Code", "vscode", true], ["GitHub", "github", true], ["TextEdit", "textedit", true],
  ["Preview", "preview", true], ["Slash", "slash", true], ["Docker", "docker", true], ["Slack", "slack", true], ["Electron", "electron", true], null,
  ["Documents", "document"], ["Trash", "trash"],
];

function Dock() {
  return (
    <div className="shrink-0 bg-linear-to-b from-black to-transparent px-[42px] pt-1 pb-[10px]">
      <nav aria-label="Dock" className="flex h-[78px] rounded-[20px] border-2 border-[#8a8ca6] bg-linear-to-r from-[#606d87] via-[#6b6f90] to-[#866b8b] pr-[6px] pl-[5px]">
        {APPS.map((app, i) => {
          if (!app) return <span key={i} className="mx-[12px] mt-2 h-[58px] w-[2px] shrink-0 bg-[#41385c]" />;
          const [label, art, running, badge] = app;
          return (
            <button key={label} aria-label={label} className="relative flex min-w-0 flex-1 flex-col items-center pt-[6px]">
              <svg width="56" height="56" viewBox="0 0 56 56" className="shrink-0" aria-hidden="true">{ART[art]}</svg>
              {running && <span className="mt-1 size-[6px] shrink-0 rounded-full bg-[#0b0a1c]" />}
              {badge && (
                <span className="absolute top-[5px] right-0 flex h-[22px] min-w-[22px] items-center justify-center rounded-full bg-[#e0503f] px-[2px] text-[12px] leading-none text-white">{badge}</span>
              )}
            </button>
          );
        })}
      </nav>
    </div>
  );
}

export default function App() {
  return (
    <div className="flex min-h-screen flex-col bg-linear-to-r from-[#1c3c64] via-[#2d4270] to-[#4b4a78] font-['Inter','Liberation_Sans',sans-serif] text-[24px] leading-none">
      <MenuBar />
      <div className="flex flex-1 flex-col bg-black pt-[2px]">
        <div className="flex flex-1 flex-col overflow-hidden rounded-[20px] border-t-2 border-[#f3f3f5] bg-[#dfe0e4]">
          <TabStrip />
          <Toolbar />
          <BookmarksBar />
          <Page />
        </div>
      </div>
      <Dock />
    </div>
  );
}
